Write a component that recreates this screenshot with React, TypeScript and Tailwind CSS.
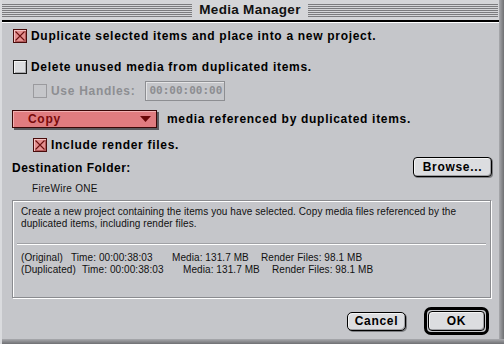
import React, { FC } from "react";

const Stripes: FC = () => (
  <div className="flex-1 flex flex-col gap-[1px] py-[3px]">
    {[0, 1, 2, 3, 4, 5, 6].map((i) => (
      <div key={i} className="h-[1px] bg-[#7b7b7e]" />
    ))}
  </div>
);

interface BoxProps {
  checked?: boolean;
  disabled?: boolean;
}

const CheckBox: FC<BoxProps> = ({ checked, disabled }) => {
  if (checked) {
    return (
      <div className="w-[14px] h-[14px] border border-[#4a0c0c] bg-[#e49090] shadow-[inset_1px_1px_0_#f3c0c0,inset_-1px_-1px_0_#b25a5a] shrink-0">
        <svg width="12" height="12" viewBox="0 0 12 12">
          <path d="M1.5 1.5 L10.5 10.5 M10.5 1.5 L1.5 10.5" stroke="#6a1010" strokeWidth="1.1" />
        </svg>
      </div>
    );
  }
  return (
    <div
      className={`w-[14px] h-[14px] border shrink-0 ${
        disabled
          ? "border-[#9a9a9e] bg-[#c5c6ca]"
          : "border-[#1a1a1a] bg-[#dcdde0] shadow-[inset_1px_1px_0_#f4f4f4,inset_-1px_-1px_0_#a8a8ac]"
      }`}
    />
  );
};

const App: FC = () => {
  return (
    <div className="w-[504px] h-[344px] bg-[#c5c6ca] relative overflow-hidden font-['Liberation_Sans',Arial,sans-serif] text-black">
      {/* window edges */}
      <div className="absolute right-0 top-0 bottom-0 w-[5px] bg-gradient-to-r from-[#a9aaae] to-[#6f7073]" />
      <div className="absolute left-0 right-0 bottom-0 h-[5px] bg-gradient-to-b from-[#a9aaae] to-[#6f7073]" />
      <div className="absolute left-0 top-0 bottom-0 w-[2px] bg-[#dadbde]" />

      {/* title bar */}
      <div className="h-[20px] flex items-center px-[2px] pr-[6px] bg-[#d4d5d8]">
        <Stripes />
        <div className="px-[7px] text-[13.5px] leading-[20px] font-bold tracking-[0.3px] text-[#111]">
          Media Manager
        </div>
        <Stripes />
      </div>
      <div className="h-[2px] bg-black mr-[5px]" />
      <div className="h-[1px] bg-white mr-[5px]" />

      <div className="pl-[13px] pr-[13px] text-[12px] font-bold tracking-[0.7px]">
        {/* row 1 */}
        <div className="mt-[6px] h-[14px] flex items-center gap-[4px]">
          <CheckBox checked />
          <span>Duplicate selected items and place into a new project.</span>
        </div>

        {/* row 2 */}
        <div className="mt-[17px] h-[14px] flex items-center gap-[4px]">
          <CheckBox />
          <span>Delete unused media from duplicated items.</span>
        </div>

        {/* row 3 */}
        <div className="mt-[7px] h-[20px] flex items-center pl-[20px]">
          <CheckBox disabled />
          <span className="ml-[4px] text-[#8d8e92]">Use Handles:</span>
          <div className="ml-[10px] w-[80px] h-[20px] border border-[#8d8e92] shadow-[inset_1px_1px_0_#e4e4e6] flex items-center pl-[3px] text-[#8d8e92] font-['DejaVu_Sans_Mono',monospace] text-[11px] tracking-[0px]">
            00:00:00:00
          </div>
        </div>

        {/* row 4 */}
        <div className="mt-[9px] h-[18px] flex items-center">
          <div className="-ml-[1px] w-[145px] h-[18px] border border-[#3a0707] bg-[#e07c80] shadow-[inset_1px_1px_0_#f2b0b2,2px_2px_0_#5a5a5e] flex items-center pl-[15px] pr-[5px]">
            <span className="flex-1 text-[#7a0a0a]">Copy</span>
            <svg width="11" height="6" viewBox="0 0 11 6">
              <path d="M0 0 L11 0 L5.5 6 Z" fill="#6a0808" />
            </svg>
          </div>
          <span className="ml-[10px]">media referenced by duplicated items.</span>
        </div>

        {/* row 5 */}
        <div className="mt-[10px] h-[14px] flex items-center pl-[20px] gap-[4px]">
          <CheckBox checked />
          <span>Include render files.</span>
        </div>

        {/* destination */}
        <div className="mt-[5px] h-[20px] flex items-center justify-between">
          <span className="-ml-[1px] mt-[2px] tracking-[0.5px]">Destination Folder:</span>
          <div className="w-[79px] h-[20px] mr-[-1px] rounded-[4px] border border-black bg-[#dcdde0] shadow-[inset_1px_1px_0_#f4f4f4,inset_-1px_-1px_0_#9d9ea2,1px_1px_0_#7d7e82] flex items-center justify-center">
            Browse...
          </div>
        </div>

        <div className="mt-[6px] pl-[19px] text-[10px] font-normal tracking-[0.3px] leading-[12px] text-[#111]">
          FireWire ONE
        </div>

        {/* info box */}
        <div className="mt-[5px] -ml-[1px] w-[479px] h-[98px] border border-[#8a8b8f] shadow-[inset_1px_1px_0_#ffffff,1px_1px_0_#ffffff] font-normal text-[10px] tracking-[0.08px] leading-[12px] text-[#111]">
          <div className="pl-[8px] pt-[5px] h-[42px]">
            Create a new project containing the items you have selected. Copy media files referenced by the
            <br />
            duplicated items, including render files.
          </div>
          <div className="mx-[4px] h-[2px] border-t border-[#a0a1a5] border-b border-b-white" />
          <div className="pl-[8px] pt-[7px]">
            <div className="flex">
              <span className="w-[50px]">(Original)</span>
              <span className="w-[101px]">Time: 00:00:38:03</span>
              <span className="w-[89px]">Media: 131.7 MB</span>
              <span>Render Files: 98.1 MB</span>
            </div>
            <div className="flex">
              <span className="w-[61px]">(Duplicated)</span>
              <span className="w-[101px]">Time: 00:00:38:03</span>
              <span className="w-[89px]">Media: 131.7 MB</span>
              <span>Render Files: 98.1 MB</span>
            </div>
          </div>
        </div>

        {/* buttons */}
        <div className="mt-[9px] flex items-center justify-end pr-[2px]">
          <div className="w-[59px] h-[19px] rounded-[5px] border border-black bg-[#dcdde0] shadow-[inset_1px_1px_0_#f4f4f4,inset_-1px_-1px_0_#9d9ea2,1px_1px_0_#7d7e82] flex items-center justify-center">
            Cancel
          </div>
          <div className="ml-[18px] w-[65px] h-[28px] rounded-[7px] border-[3px] border-black p-[1px] flex">
            <div className="flex-1 rounded-[4px] border border-black bg-[#dcdde0] shadow-[inset_1px_1px_0_#f4f4f4,inset_-1px_-1px_0_#9d9ea2] flex items-center justify-center">
              OK
            </div>
          </div>
        </div>
      </div>
    </div>
  );
};

export default App;
